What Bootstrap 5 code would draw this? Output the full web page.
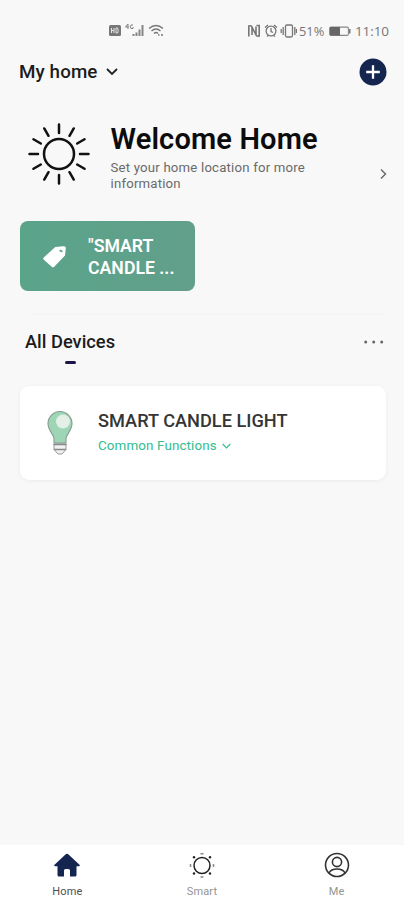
<!DOCTYPE html>
<html lang="en">
<head>
<meta charset="utf-8">
<meta name="viewport" content="width=device-width, initial-scale=1">
<title>My home</title>
<link href="https://cdn.jsdelivr.net/npm/bootstrap@5.3.0/dist/css/bootstrap.min.css" rel="stylesheet">
<style>
body{font-family:Roboto,"Liberation Sans",sans-serif;background:#f8f8f8;color:#1c1c1c;height:900px;overflow:hidden}
svg{display:block;flex:none}
.status{height:46px;padding:15px 15px 0 108px;color:#777;font:13.5px/30px "Open Sans",sans-serif}
.status .clock{width:34px;letter-spacing:-.1px}
.status .pct{width:26px;font-size:12.8px;margin-left:2px}
.topbar{height:51px;padding:0 17px 0 19px}
.home-name{font-size:18.8px;font-weight:500;line-height:24px;letter-spacing:.1px}
.welcome{height:124px;padding:26px 17px 0 28px}
.welcome-text{margin-left:20.500px}
.welcome h1{font-size:29px;font-weight:600;line-height:34px;letter-spacing:.15px;color:#0c0c0c;margin:-1px 0 4px}
.welcome p{font-size:13.2px;line-height:16px;color:#6a6a6a;letter-spacing:.2px}
.go{margin-bottom:41px}
.scene{width:175px;height:70px;margin-left:20px;background:linear-gradient(90deg,#5aa48a,#629f8a);border-radius:8px;padding-left:22px}
.scene-name{font-size:17.7px;font-weight:600;line-height:22px;color:#fff;margin:2px 0 0 22px}
.rule{height:1px;background:#f4f4f4;margin:23px 20px 0 28px}
.devices-head{height:71px;padding:15px 20px 0 25px}
.tab-name{font-size:18.3px;font-weight:500;line-height:24px}
.tab-mark{width:11px;height:3px;border-radius:1.5px;background:#1b1646;margin:7px auto 0}
.more{margin-top:10px}
.device{height:94px;margin:0 18px 0 20px;border-radius:9px;background:#fff;box-shadow:0 1px 4px rgba(0,0,0,.055);padding:24px 0 0 26px}
.device-text{margin-left:24px}
.device h2{font-size:18.2px;font-weight:500;line-height:22px;color:#353535;margin:0 0 4px}
.functions{font-size:13.4px;line-height:20px;letter-spacing:.12px;color:#31bd91}
.functions svg{margin-left:5px}
.tabs{height:55px;background:#fff}
.tabs a{color:#939393;font-size:11px;line-height:14px;padding-top:7px;text-decoration:none;letter-spacing:.1px}
.tabs a.current{color:#505050}
.tabs svg{margin-bottom:7px}
</style>
</head>
<body class="d-flex flex-column">
<header>
<div class="status d-flex align-items-center">
<svg width="57" height="16" viewBox="0 0 57 16" fill="none" stroke="#777" stroke-width="1.4">
<rect x="1" y="2" width="12" height="11" rx="1.5" fill="#777" stroke="none"/><path d="M3.5 5v5M6 5v5M3.5 7.500H6M8 5v5h1.500q1.500-2.500 0-5z" stroke="#e4e4e4" stroke-width="1"/>
<path d="M20 1l-2.500 3h3M20 1v5M25 2h-2q-1.500 2 0 3.500h2V4" stroke-width=".9"/>
<path d="M25.500 13v-2M28.500 13V9.500M31.500 13V6.500M34.500 13V2" stroke-width="2" stroke="#858585"/>
<path d="M41 5.500q7-6 14 0M43.500 8q4.500-4 9 0M46 10.500q2-2 4 0M50 12h1.500M53 12h2"/>
</svg>
<svg class="ms-auto" width="50" height="16" viewBox="0 0 50 16" fill="none" stroke="#777" stroke-width="1.3">
<path d="M1.800 13.500V3q2.700-.7 3.200 1v8M5 4l4 8M9 12V3.500M9 12q.5 1.500 3.200 1V2.500H9.500" stroke-width="1.600"/>
<circle cx="24" cy="8" r="4.900"/><path d="M24 5v3.500l2 1M18 4.500l3-2.500M27 2l3 2.500M20 13.500l1-1M28 13.500l-1-1"/>
<rect x="38.500" y="2" width="7" height="12" rx="1.500"/><path d="M36.200 4v8M47.800 4v8M34.200 6v4M49.500 6v4"/>
</svg>
<span class="pct">51%</span>
<svg class="ms-1 me-1" width="22" height="12" viewBox="0 0 22 12"><rect x=".6" y="2.100" width="18.800" height="8.300" rx="1.500" fill="none" stroke="#888" stroke-width="1.100"/><path d="M1 2h10v8.500H1z" fill="#666"/><path d="M20 4h1.500v4.500H20z" fill="#777"/></svg>
<span class="clock">11:10</span>
</div>
<div class="topbar d-flex align-items-center">
<span class="home-name">My home</span>
<svg class="ms-2" width="12" height="8" viewBox="0 0 12 8" fill="none" stroke="#222" stroke-width="1.800"><path d="M1 1l5 5 5-5"/></svg>
<svg class="ms-auto" width="28" height="28" viewBox="0 0 28 28"><circle cx="14" cy="14" r="13.500" fill="#14264f"/><path d="M14 7.200v13.600M7.200 14h13.600" stroke="#fff" stroke-width="2.300"/></svg>
</div>
</header>
<main class="flex-grow-1">
<section class="welcome d-flex">
<svg width="62" height="62" viewBox="-31 -31 62 62" fill="none" stroke="#111" stroke-width="2.500" stroke-linecap="round">
<circle r="15"/><path d="M0-29.500v8.500M0 21v8.500M21 0h8.500M-29.500 0h8.500"/><path transform="rotate(30)" d="M0-29.500v8.500M0 21v8.500M21 0h8.500M-29.500 0h8.500"/><path transform="rotate(60)" d="M0-29.500v8.500M0 21v8.500M21 0h8.500M-29.500 0h8.500"/>
</svg>
<div class="welcome-text"><h1 class="text-nowrap">Welcome Home</h1><p class="mb-0">Set your home location for more<br>information</p></div>
<svg class="go ms-auto mt-auto" width="7" height="12" viewBox="0 0 7 12" fill="none" stroke="#666" stroke-width="1.400"><path d="M1 1.500L5.500 6 1 10.500"/></svg>
</section>
<section class="scene d-flex align-items-center">
<svg width="24" height="24" viewBox="0 0 24 24"><path fill="#fff" fill-rule="evenodd" d="M13.300 3L21.500 2.200Q24 2 23.800 4L23 11.500 12 23Q11 23.800 10 23L1.600 15.500Q.8 14.500 1.700 13.500zM18.500 5.500L17 7l2.500 1.200 1.500-1z"/></svg>
<span class="scene-name text-nowrap">"SMART<br>CANDLE ...</span>
</section>
<div class="rule"></div>
<section class="devices-head d-flex justify-content-between">
<div><span class="tab-name d-block">All Devices</span><div class="tab-mark"></div></div>
<svg class="more" width="20" height="4" viewBox="0 0 20 4" fill="#666"><circle cx="1.700" cy="2" r="1.500"/><circle cx="9.700" cy="2" r="1.500"/><circle cx="17.700" cy="2" r="1.500"/></svg>
</section>
<section class="device d-flex">
<svg width="28" height="46" viewBox="0 0 28 46"><path d="M8 33V29C8 24 2 21 2 13.500A12 12 0 0 1 26 13.500C26 21 20 24 20 29v4z" fill="#9dd5b5" stroke="#8a9b92" stroke-width="1.100"/><circle cx="17" cy="11.500" r="7" fill="#e3efe7"/><path d="M8 34h12v5.500l-4 4.500h-4l-4-4.500z" fill="#f1f1f1" stroke="#999"/><path d="M7.500 34.500h13M8 39.500h12" stroke="#888" stroke-width="1.300"/></svg>
<div class="device-text"><h2>SMART CANDLE LIGHT</h2><div class="functions d-flex align-items-center">Common Functions<svg width="9" height="6" viewBox="0 0 9 6" fill="none" stroke="#31bd91" stroke-width="1.200"><path d="M.7 1l3.800 3.800L8.300 1"/></svg></div></div>
</section>
</main>
<nav class="tabs d-flex">
<a href="#" class="current col-4 d-flex flex-column align-items-center"><svg width="26" height="26" viewBox="0 0 26 26" fill="#14264f"><path d="M13 1.700Q13.800 1.700 14.500 2.500L25.500 12.800q.8 1.200-.5 1.400H22.500V23q0 1.500-1.500 1.500H16v-6q0-1.500-1.500-1.500h-3Q10 17 10 18.500v6H5Q3.500 24.500 3.500 23V14.200H1Q-.3 14 .5 12.800L11.500 2.500Q12.200 1.700 13 1.700z"/></svg>Home</a>
<a href="#" class="col-4 d-flex flex-column align-items-center"><svg width="26" height="26" viewBox="-13 -13 26 26"><circle r="8" cy=".5" fill="none" stroke="#222" stroke-width="1.500"/><g fill="#222"><circle cx="-8" cy="-7.800" r="1.200"/><circle cx="8" cy="-7.800" r="1.200"/><circle cx="-8" cy="8.500" r="1.200"/><circle cx="8" cy="8.500" r="1.200"/></g><path d="M-1.500-11.300h3M-1.500 12h3M-11.500-1v3M11.500-1v3" stroke="#888" stroke-width="1.500"/></svg>Smart</a>
<a href="#" class="col-4 d-flex flex-column align-items-center"><svg width="26" height="26" viewBox="0 0 26 26" fill="none" stroke="#333" stroke-width="1.600"><circle cx="13" cy="13" r="11.500"/><circle cx="13" cy="10" r="4.600"/><path d="M5 21q2-4 8-4t8 4"/></svg>Me</a>
</nav>
<script src="https://cdn.jsdelivr.net/npm/bootstrap@5.3.0/dist/js/bootstrap.bundle.min.js"></script>
</body>
</html>
